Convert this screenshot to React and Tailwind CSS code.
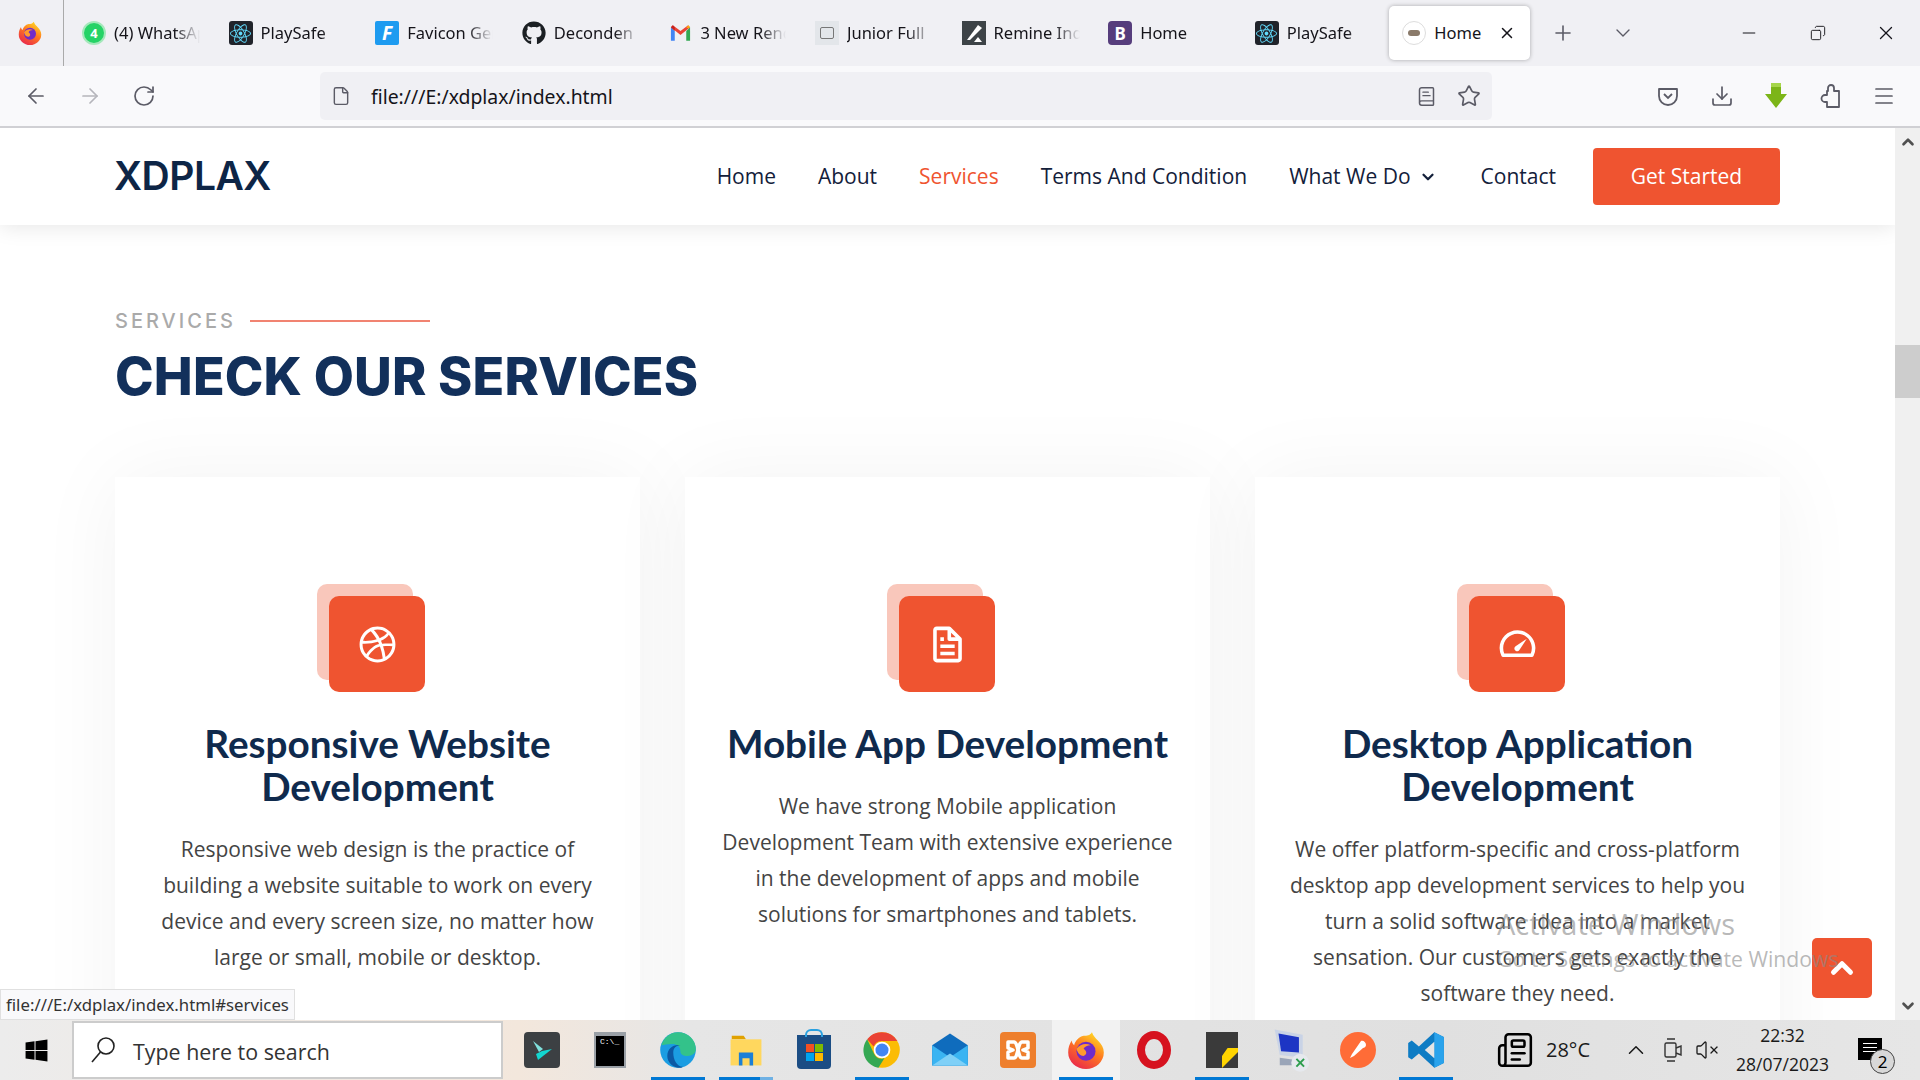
import {
  ArrowLeft,
  ArrowRight,
  RotateCw,
  File,
  BookText,
  Star,
  Download,
  Menu,
  Plus,
  ChevronDown,
  ChevronUp,
  Minus,
  X,
  Copy,
  Newspaper,
  VolumeX,
} from "lucide-react";
import { BiLogoDribbble, BiFile, BiTachometer } from "react-icons/bi";
import { FaGithub, FaWindows, FaReact } from "react-icons/fa";

function Firefox({ size = 24 }) {
  return (
    <svg width={size} height={size} viewBox="0 0 32 32">
      <defs>
        <linearGradient id="ffOuter" x1="0.8" y1="0" x2="0.2" y2="1">
          <stop offset="0" stopColor="#ffe226" />
          <stop offset="0.45" stopColor="#ff7a1f" />
          <stop offset="1" stopColor="#e8234f" />
        </linearGradient>
      </defs>
      <path d="M21 1c1 3 3 5 5 7 3 3 5 6 5 10a15 14 0 0 1-30 0c0-4 1-7 3-10 0 2 1 3 2 4 1-4 4-7 8-8 3 0 5 0 7-3z" fill="url(#ffOuter)" />
      <circle cx="16" cy="17" r="8" fill="#6f2bc9" />
      <path d="M8 15c3-4 8-5 12-3-3 0-5 1-6 3 3 2 3 5 0 6-3 0-5-2-6-6z" fill="#ff9a2c" />
    </svg>
  );
}

function Gmail() {
  return (
    <svg width="23" height="24" viewBox="0 0 24 24">
      <path d="M2 6v14h4V10z" fill="#4285f4" />
      <path d="M22 6v14h-4V10z" fill="#34a853" />
      <path d="M2 6l10 8 10-8-2-2-8 6-8-6z" fill="#ea4335" />
      <path d="M18 7l4-1-2-2z" fill="#fbbc04" />
      <path d="M2 6l4 4V6L4 4z" fill="#c5221f" />
    </svg>
  );
}

function ReactTile() {
  return (
    <span className="w-6 h-6 rounded-[3px] bg-[#20232a] flex items-center justify-center text-[#61dafb]">
      <FaReact size={21} />
    </span>
  );
}

const tabs = [
  {
    title: "(4) WhatsApp",
    icon: (
      <span className="w-6 h-6 rounded-full bg-[#25d366] border-2 border-[#a5e8bb] flex items-center justify-center text-white font-bold text-[13px] leading-none">
        4
      </span>
    ),
  },
  { title: "PlaySafe", icon: <ReactTile /> },
  {
    title: "Favicon Generator",
    icon: (
      <span className="w-6 h-6 rounded-[2px] bg-[#1d9bf0] flex items-center justify-center text-white font-bold italic text-[19px] leading-none">
        F
      </span>
    ),
  },
  { title: "Deconden", icon: <FaGithub size={24} className="text-[#1b1f23]" /> },
  { title: "3 New Rendered", icon: <Gmail /> },
  {
    title: "Junior Full",
    icon: (
      <span className="w-6 h-6 bg-[#e3e6ea] flex items-center justify-center">
        <span className="w-3.5 h-3 rounded-[2px] border border-[#777]" />
      </span>
    ),
  },
  {
    title: "Remine Indian",
    icon: (
      <span className="w-6 h-6 bg-[#3d4347] flex items-center justify-center">
        <svg width="20" height="20" viewBox="0 0 20 20">
          <path d="M3 17L14 2l4 3L6 17z" fill="#fff" />
          <path d="M10 19l4-5 4 5z" fill="#fff" />
        </svg>
      </span>
    ),
  },
  {
    title: "Home",
    icon: (
      <span className="w-6 h-6 rounded-[4px] bg-[#563d7c] flex items-center justify-center text-white font-bold text-[17px] leading-none">
        B
      </span>
    ),
  },
  { title: "PlaySafe", icon: <ReactTile /> },
];

function TabBar() {
  return (
    <div className="h-[66px] bg-[#f0f0f4] flex items-center shrink-0 text-[16.5px] text-[#15141a]">
      <div className="w-[63px] h-full flex items-center justify-center pr-1">
        <Firefox size={24} />
      </div>
      <div className="w-px h-full bg-[#aaa]" />
      <div className="w-[18px]" />
      {tabs.map((tab, i) => (
        <div key={i} className="w-[146.6px] flex items-center gap-2 shrink-0">
          <span className="w-6 h-6 flex items-center justify-center shrink-0">{tab.icon}</span>
          <span className="w-[86px] whitespace-nowrap overflow-hidden [mask-image:linear-gradient(to_right,black_70%,transparent)]">
            {tab.title}
          </span>
        </div>
      ))}
      <div className="w-[141px] h-[54px] -ml-[12px] bg-white rounded-[5px] shadow-[0_0_4px_rgba(0,0,0,0.3)] flex items-center pl-[13px] pr-[14px] shrink-0">
        <span className="w-6 h-6 rounded-full border border-[#ddd] bg-white flex items-center justify-center">
          <span className="w-3 h-1.5 rounded-full bg-[#8a7a6a]" />
        </span>
        <span className="ml-2">Home</span>
        <X size={18} className="ml-auto text-[#15141a]" />
      </div>
      <Plus size={24} strokeWidth={1.6} className="ml-[21px] text-[#5b5b66]" />
      <ChevronDown size={24} strokeWidth={1.4} className="ml-[36px] text-[#5b5b66]" />
      <div className="ml-auto flex items-center gap-[49px] pr-[23px]">
        <Minus size={20} strokeWidth={1.2} className="mr-[2px]" />
        <Copy size={16} strokeWidth={1.4} className="-scale-x-100" />
        <X size={22} strokeWidth={1.4} />
      </div>
    </div>
  );
}

function ToolBar() {
  return (
    <div className="h-[62px] bg-[#f9f9fb] border-b-2 border-[#d0d0d4] flex items-center shrink-0 text-[#5b5b66]">
      <div className="w-[320px] flex items-center gap-[30px] pl-[24px]">
        <ArrowLeft size={24} strokeWidth={1.7} />
        <ArrowRight size={24} strokeWidth={1.7} className="text-[#b5b5bb]" />
        <RotateCw size={24} strokeWidth={1.7} />
      </div>
      <div className="w-[1172px] h-[48px] rounded-[5px] bg-[#f0f0f4] flex items-center pl-[11px] pr-[11px]">
        <File size={20} strokeWidth={1.7} />
        <span className="ml-[20px] pt-[2px] text-[19.4px] text-[#15141a] font-['Noto_Sans',sans-serif]">file:///E:/xdplax/index.html</span>
        <BookText size={21} strokeWidth={1.7} className="ml-auto" />
        <Star size={24} strokeWidth={1.7} className="ml-[20px]" />
      </div>
      <div className="flex-1 flex items-center justify-end gap-[30px] pr-[24px]">
        <svg width="24" height="24" viewBox="0 0 24 24" fill="none" stroke="currentColor" strokeWidth="1.8">
          <path d="M3 5h18v7a9 9 0 0 1-18 0z" strokeLinejoin="round" />
          <path d="M8 10l4 4 4-4" />
        </svg>
        <Download size={24} strokeWidth={1.7} />
        <svg width="24" height="28" viewBox="0 0 24 28">
          <path d="M7 1h10v11h6L12 26 1 12h6z" fill="#7cb518" />
          <path d="M7 1h10v4H7z" fill="#a6d64a" />
        </svg>
        <svg width="24" height="26" viewBox="0 0 24 26" fill="none" stroke="currentColor" strokeWidth="1.8" strokeLinejoin="round">
          <path d="M10 5a3 3 0 0 1 6 0v3h5v16H9v-5H7a3.5 3.5 0 0 1 0-7h2V8h1z" />
        </svg>
        <Menu size={24} strokeWidth={1.7} />
      </div>
    </div>
  );
}

function Nav() {
  const links = ["Home", "About", "Services", "Terms And Condition"];
  return (
    <header className="h-[97px] bg-white flex items-center pl-[114px] pr-[115px] shadow-[0_2px_20px_rgba(0,0,0,0.1)] relative z-10 shrink-0">
      <span className="font-['Inter',sans-serif] font-semibold text-[39px] text-[#0d2546] tracking-[-0.5px]">XDPLAX</span>
      <nav className="ml-auto flex items-center gap-[42px] text-[21px] text-[#13203a] font-['Open_Sans',sans-serif]">
        {links.map((l) => (
          <span key={l} className={l === "Services" ? "text-[#ef5430]" : ""}>
            {l}
          </span>
        ))}
        <span className="flex items-center gap-2 mr-[2px]">
          What We Do
          <ChevronDown size={18} strokeWidth={3} />
        </span>
        <span>Contact</span>
      </nav>
      <button className="ml-[37px] w-[187px] h-[57px] rounded-[4px] bg-[#ef5430] text-white text-[21px] font-['Open_Sans',sans-serif]">
        Get Started
      </button>
    </header>
  );
}

const services = [
  {
    icon: <BiLogoDribbble size={43} />,
    title: "Responsive Website Development",
    text: "Responsive web design is the practice of building a website suitable to work on every device and every screen size, no matter how large or small, mobile or desktop.",
  },
  {
    icon: <BiFile size={43} />,
    title: "Mobile App Development",
    text: "We have strong Mobile application Development Team with extensive experience in the development of apps and mobile solutions for smartphones and tablets.",
  },
  {
    icon: <BiTachometer size={43} />,
    title: "Desktop Application Development",
    text: "We offer platform-specific and cross-platform desktop app development services to help you turn a solid software idea into a market sensation. Our customers gets exactly the software they need.",
  },
];

function Card({ icon, title, text }) {
  return (
    <div className="h-[640px] bg-white shadow-[0_0_80px_rgba(0,0,0,0.05)] flex flex-col items-center pt-[119px] px-[34px] text-center">
      <div className="relative w-[96px] h-[96px] mb-[30px] mr-[1px]">
        <div className="absolute -left-[12px] -top-[12px] w-[96px] h-[96px] rounded-[10px] bg-[#f9c7bb]" />
        <div className="absolute inset-0 rounded-[10px] bg-[#ef5430] text-white flex items-center justify-center">{icon}</div>
      </div>
      <h4 className="font-['Lato',sans-serif] font-bold text-[38.7px] leading-[43px] text-[#0f2a4d] mb-[23px]">{title}</h4>
      <p className="font-['Open_Sans',sans-serif] text-[21px] leading-[36px] text-[#444444]">{text}</p>
    </div>
  );
}

function Page() {
  return (
    <main className="flex-1 min-w-0 flex flex-col overflow-hidden">
      <Nav />
      <section className="px-[115px] pt-[82px] bg-white flex-1">
        <div className="flex items-center gap-[14px] h-[28px]">
          <span className="font-['Inter',sans-serif] font-medium text-[20px] tracking-[3px] text-[#aaaaaa]">SERVICES</span>
          <span className="w-[180px] h-[2px] bg-[#f18371]" />
        </div>
        <h2 className="mt-[8px] font-['Inter',sans-serif] font-extrabold text-[52px] leading-[68px] tracking-[0.15px] text-[#12305b]">
          CHECK OUR SERVICES
        </h2>
        <div className="mt-[66px] grid grid-cols-3 gap-[45px]">
          {services.map((s) => (
            <Card key={s.title} {...s} />
          ))}
        </div>
      </section>
    </main>
  );
}

function Scrollbar() {
  return (
    <div className="relative z-20 w-[25px] bg-[#f0f0f0] flex flex-col items-center justify-between py-[5px] text-[#505050] shrink-0">
      <ChevronUp size={18} strokeWidth={3.5} />
      <div className="absolute top-[217px] left-0 w-full h-[53px] bg-[#cdcdcd]" />
      <ChevronDown size={18} strokeWidth={3.5} />
    </div>
  );
}

function EdgeIcon() {
  return (
    <svg width="38" height="38" viewBox="0 0 32 32">
      <circle cx="16" cy="16" r="15" fill="#1b9de2" />
      <path d="M2 12C4 5 10 1 16 1c8 0 15 6 15 14 0 4-3 6-7 6-3 0-6-1-6-4 0-4-3-6-7-6-4 0-7 1-9 1z" fill="#33c28a" />
      <path d="M12 18c0-4 3-6 6-6-6-1-11 3-11 9 0 5 4 9 9 10 2 0 3 0 4-1-5 0-8-6-8-12z" fill="#0c59a4" />
    </svg>
  );
}

function ChromeIcon() {
  return (
    <svg width="38" height="38" viewBox="0 0 32 32">
      <circle cx="16" cy="16" r="15" fill="#fbbc04" />
      <path d="M16 1a15 15 0 0 1 13 7.5H16a7.5 7.5 0 0 0-7 4.5L3.5 7A15 15 0 0 1 16 1z" fill="#ea4335" />
      <path d="M3.5 7L9.5 19.5A7.5 7.5 0 0 0 18 23l-5 8A15 15 0 0 1 3.5 7z" fill="#34a853" />
      <circle cx="16" cy="16" r="7" fill="#fff" />
      <circle cx="16" cy="16" r="5.5" fill="#4285f4" />
    </svg>
  );
}

const taskIcons = [
  {
    icon: (
      <span className="w-9 h-9 rounded-[4px] bg-[#3c4043] flex items-center justify-center">
        <svg width="24" height="24" viewBox="0 0 24 24">
          <path d="M3 3l10 8-4 3z" fill="#7fe0dc" />
          <path d="M22 11L8 22l-2-6 6-3z" fill="#12d6d0" />
        </svg>
      </span>
    ),
  },
  {
    icon: (
      <span className="w-8 h-9 bg-black border-2 border-[#9aa0a6] border-t-[4px] pl-1 pt-0.5 text-white text-[8px] leading-none font-['Liberation_Mono',monospace]">
        C:\_
      </span>
    ),
  },
  { icon: <EdgeIcon />, bar: "bg-[#0078d4]" },
  {
    icon: (
      <svg width="38" height="38" viewBox="0 0 32 32">
        <path d="M4 4h10l2 3H4z" fill="#e0a100" />
        <path d="M3 7h26v22H3z" fill="#ffd75e" />
        <path d="M10 18h12v11h-3v-6h-6v6h-3z" fill="#1c7fd6" />
      </svg>
    ),
    bar: "bg-[linear-gradient(to_right,#0078d4_75%,#6fb1e4_75%)]",
  },
  {
    icon: (
      <span className="relative w-[34px] h-[34px] rounded-b-[4px] bg-[#1b4d84] flex items-center justify-center mt-1">
        <span className="absolute -top-1.5 left-2 w-[18px] h-2 rounded-t-md border-2 border-b-0 border-[#29a0e0]" />
        <span className="grid grid-cols-2 gap-px">
          <span className="w-2 h-2 bg-[#f25022]" />
          <span className="w-2 h-2 bg-[#7fba00]" />
          <span className="w-2 h-2 bg-[#00a4ef]" />
          <span className="w-2 h-2 bg-[#ffb900]" />
        </span>
      </span>
    ),
  },
  { icon: <ChromeIcon />, bar: "bg-[#0078d4]" },
  {
    icon: (
      <svg width="38" height="36" viewBox="0 0 32 30">
        <path d="M1 11L16 1l15 10v17H1z" fill="#0f6cbd" />
        <path d="M1 11l15 10 15-10v17H1z" fill="#3ab4f2" />
        <path d="M1 28l15-10 15 10z" fill="#7fd0f7" />
      </svg>
    ),
  },
  {
    icon: (
      <span className="w-9 h-9 rounded-[4px] bg-[#ee7f2d] flex items-center justify-center">
        <svg width="28" height="28" viewBox="0 0 28 28" fill="none" stroke="#fff" strokeWidth="3.5">
          <path d="M4 6h6c2 0 3 4 4 8 1-4 2-8 4-8h6v6l-5 2 5 2v6h-6c-2 0-3-4-4-8-1 4-2 8-4 8H4v-6l5-2-5-2z" strokeLinejoin="round" />
        </svg>
      </span>
    ),
  },
  { icon: <Firefox size={38} />, bar: "bg-[#0078d4]", active: true },
  {
    icon: <span className="w-[34px] h-[38px] rounded-[50%] border-[8px] border-[#d6121f] bg-transparent" />,
  },
  {
    icon: (
      <span className="relative w-8 h-9 bg-[#3a3a3a] overflow-hidden">
        <span className="absolute right-0 bottom-0 w-4 h-5 bg-[#ffd400] [clip-path:polygon(35%_0,100%_0,100%_20%,0_100%,0_40%)]" />
      </span>
    ),
    bar: "bg-[#0078d4]",
  },
  {
    icon: (
      <svg width="42" height="46" viewBox="0 0 32 36">
        <path d="M4 2l22 4v18L8 22z" fill="#c9d3e6" />
        <path d="M7 5l16 3v12L9 19z" fill="#1d35c4" />
        <path d="M8 24l14 2v4H8z" fill="#9aa5b8" />
        <circle cx="24" cy="28" r="7" fill="#e6e9ee" />
        <path d="M21 25l3 3-3 3M27 25l-3 3 3 3" stroke="#2e9e4f" strokeWidth="1.5" fill="none" />
      </svg>
    ),
  },
  {
    icon: (
      <span className="w-9 h-9 rounded-full bg-[#ff6c37] flex items-center justify-center">
        <svg width="22" height="22" viewBox="0 0 22 22" fill="#fff">
          <path d="M14 2c2-1 5 1 5 4 0 2-2 3-3 3L7 17l-4 2 2-4z" />
        </svg>
      </span>
    ),
  },
  {
    icon: (
      <svg width="38" height="38" viewBox="0 0 32 32">
        <path d="M23 1l8 4v22l-8 4-13-12-6 5-3-2v-12l3-2 6 5z" fill="#0e7cc4" />
        <path d="M23 1l8 4v22l-8 4z" fill="#2aa3ec" />
        <path d="M23 9l-8 7 8 7z" fill="#e5e5e5" />
      </svg>
    ),
    bar: "bg-[#0078d4]",
  },
];

function TaskBar() {
  return (
    <div className="h-[60px] bg-[linear-gradient(to_right,#ececec_0,#f3e7dc_27%,#e6e6e6_36%,#e0e0e0_75%,#e6e6e6_100%)] flex items-center shrink-0 text-[#1a1a1a] font-['Open_Sans',sans-serif]">
      <div className="w-[72px] flex justify-center">
        <FaWindows size={25} className="text-black" />
      </div>
      <div className="w-[431px] h-[58px] bg-white border-2 border-[#ccc] flex items-center pl-[16px]">
        <svg width="26" height="30" viewBox="0 0 26 30" fill="none" stroke="#222" strokeWidth="1.6">
          <circle cx="16" cy="11" r="8" />
          <path d="M10.5 17L2 27" />
        </svg>
        <span className="ml-[17px] pt-[4px] text-[21.4px] text-[#333]">Type here to search</span>
      </div>
      <div className="flex h-full ml-[5px]">
        {taskIcons.map((t, i) => (
          <div key={i} className={`relative w-[68px] h-full flex items-center justify-center ${t.active ? "bg-[#f2f2f2]" : ""}`}>
            {t.icon}
            {t.bar && <span className={`absolute bottom-0 left-[7px] right-[7px] h-[3px] ${t.bar}`} />}
          </div>
        ))}
      </div>
      <div className="flex-1 flex items-center h-full pl-[36px] pr-[28px]">
        <Newspaper size={38} strokeWidth={1.6} className="text-black" />
        <span className="ml-[12px] text-[20px]">28°C</span>
        <ChevronUp size={26} strokeWidth={1.4} className="ml-[33px]" />
        <svg width="20" height="30" viewBox="0 0 20 30" fill="none" stroke="#333" strokeWidth="1.4" className="ml-[14px]">
          <rect x="2" y="8" width="11" height="14" rx="1.5" />
          <path d="M13 13l5-2v9l-5-2M4 4h8M4 26h8" />
        </svg>
        <VolumeX size={24} strokeWidth={1.3} className="ml-[12px]" />
        <div className="ml-auto flex flex-col items-center text-[17.5px] leading-[29px] mr-[63px]">
          <span>22:32</span>
          <span>28/07/2023</span>
        </div>
      </div>
    </div>
  );
}

export default function App() {
  return (
    <div className="relative w-[1920px] h-[1080px] overflow-hidden flex flex-col bg-white font-['Noto_Sans',sans-serif]">
      <TabBar />
      <ToolBar />
      <div className="flex-1 min-h-0 flex">
        <Page />
        <Scrollbar />
      </div>
      <TaskBar />

      {/* overlays */}
      <div className="absolute left-0 top-[989px] w-[295px] h-[31px] bg-[#f9f9fb] border border-[#e0e0e0] flex items-center pl-[5px] pt-[1px] text-[16.8px] text-[#333] z-30">
        file:///E:/xdplax/index.html#services
      </div>
      <div className="absolute left-[1812px] top-[938px] w-[60px] h-[60px] rounded-[5px] bg-[#ef5430] flex items-center justify-center text-white z-30">
        <ChevronUp size={34} strokeWidth={3.5} />
      </div>
      <div className="absolute left-[1497px] top-[905px] z-30 text-[#8a8a8a]/60 font-['Open_Sans',sans-serif] pointer-events-none whitespace-nowrap">
        <div className="text-[29px] leading-[38px]">Activate Windows</div>
        <div className="text-[21.2px] leading-[30px] mt-[1px]">Go to Settings to activate Windows</div>
      </div>
      <div className="absolute left-[1858px] top-[1038px] z-30">
        <div className="w-6 h-[22px] bg-black flex flex-col gap-[3px] items-center pt-[5px]">
          <span className="w-3.5 h-px bg-white" />
          <span className="w-3.5 h-px bg-white" />
          <span className="w-3.5 h-px bg-white" />
        </div>
        <span className="absolute left-[12px] top-[11px] w-[25px] h-[25px] rounded-full bg-[#d8d8d8] border border-[#444] flex items-center justify-center text-[17px] text-black">
          2
        </span>
      </div>
    </div>
  );
}
